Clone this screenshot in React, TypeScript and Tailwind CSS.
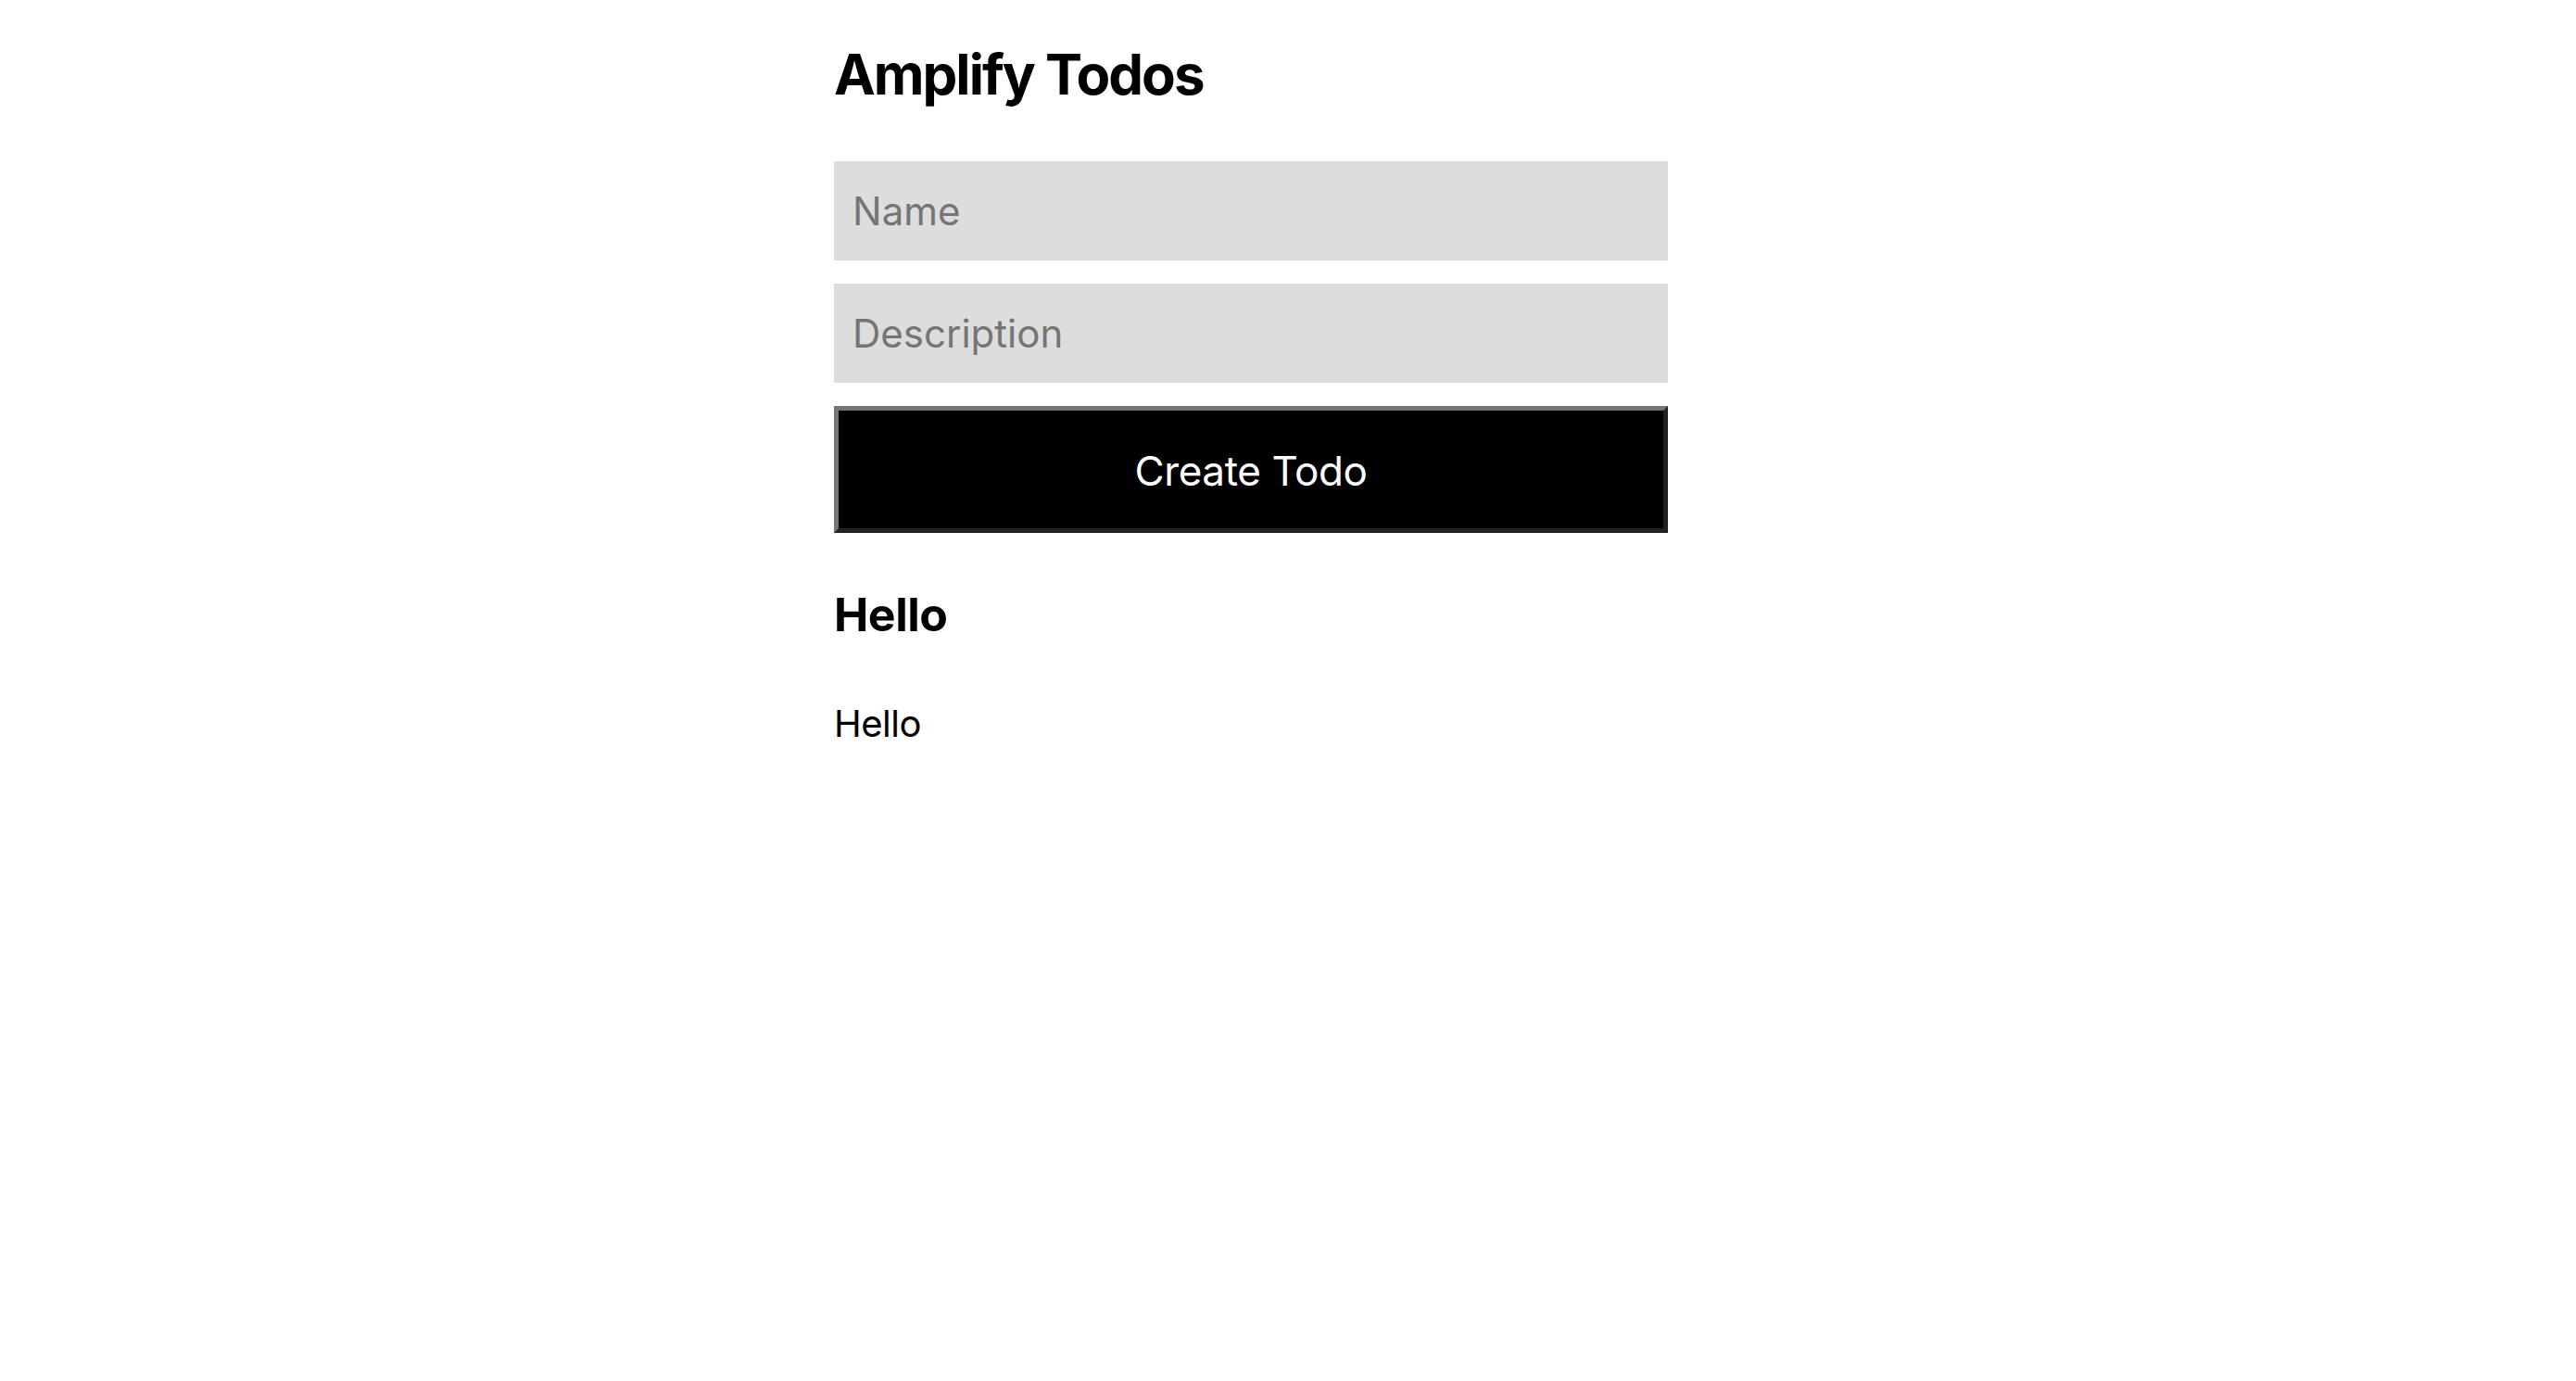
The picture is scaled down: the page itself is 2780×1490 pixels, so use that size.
import React from "react";

export default function App() {
  return (
    <div className="min-h-[1490px] w-full bg-white" style={{ fontFamily: "Inter, 'Noto Sans', sans-serif" }}>
      <div className="ml-[900px] w-[900px] pt-[44px] flex flex-col">
        <h2 className="text-[60px] leading-[72px] font-bold text-black tracking-[-2px]">Amplify Todos</h2>
        <input
          placeholder="Name"
          className="mt-[58px] h-[107px] w-full bg-[#dddddd] px-[20px] text-[42px] text-black placeholder:text-[#757575] outline-none border-0"
        />
        <input
          placeholder="Description"
          className="mt-[25px] h-[107px] w-full bg-[#dddddd] px-[20px] text-[42px] text-black placeholder:text-[#757575] outline-none border-0"
        />
        <button className="mt-[25px] h-[137px] w-full bg-black text-white text-[44px] tracking-[-0.4px] pt-[2px] border-[5px] border-t-[#767676] border-l-[#767676] border-b-[#222222] border-r-[#222222]">
          Create Todo
        </button>
        <div className="mt-[58px]">
          <h3 className="text-[50px] leading-[60px] font-bold text-black tracking-[-0.5px]">Hello</h3>
          <p className="mt-[64px] text-[40px] leading-[48px] text-black tracking-[-0.5px]">Hello</p>
        </div>
      </div>
    </div>
  );
}
